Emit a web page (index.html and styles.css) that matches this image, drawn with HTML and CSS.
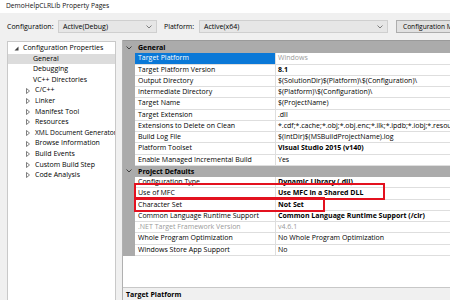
FILE: index.html
```html
<!DOCTYPE html>
<html>
<head>
<meta charset="utf-8">
<link rel="stylesheet" href="styles.css">
</head>
<body>
<div class="title">DemoHelpCLRLib Property Pages</div>
<div class="toolbar">
  <span class="lbl lbl-config">Configuration:</span>
  <div class="combo combo-config"><span>Active(Debug)</span><svg class="arrow" width="6" height="4" viewBox="0 0 6 4"><polyline points="0.5,0.5 3,3 5.5,0.5" fill="none" stroke="#707070" stroke-width="0.9"/></svg></div>
  <span class="lbl lbl-platform">Platform:</span>
  <div class="combo combo-platform"><span>Active(x64)</span><svg class="arrow" width="6" height="4" viewBox="0 0 6 4"><polyline points="0.5,0.5 3,3 5.5,0.5" fill="none" stroke="#707070" stroke-width="0.9"/></svg></div>
  <div class="button">Configuration Manager...</div>
</div>
<div class="main">
  <div class="tree">
    <div class="node lvl0"><svg class="tri" width="5" height="5" viewBox="0 0 5 5"><polygon points="4.5,0.5 4.5,4.5 0.5,4.5" fill="#404040"/></svg>Configuration Properties</div>
    <div class="node lvl1 sel">General</div>
    <div class="node lvl1">Debugging</div>
    <div class="node lvl1">VC++ Directories</div>
    <div class="node lvl1c"><svg class="tri" width="4" height="6" viewBox="0 0 4 6"><polygon points="0.5,0.5 3.5,3 0.5,5.5" fill="none" stroke="#606060" stroke-width="0.8"/></svg>C/C++</div>
    <div class="node lvl1c"><svg class="tri" width="4" height="6" viewBox="0 0 4 6"><polygon points="0.5,0.5 3.5,3 0.5,5.5" fill="none" stroke="#606060" stroke-width="0.8"/></svg>Linker</div>
    <div class="node lvl1c"><svg class="tri" width="4" height="6" viewBox="0 0 4 6"><polygon points="0.5,0.5 3.5,3 0.5,5.5" fill="none" stroke="#606060" stroke-width="0.8"/></svg>Manifest Tool</div>
    <div class="node lvl1c"><svg class="tri" width="4" height="6" viewBox="0 0 4 6"><polygon points="0.5,0.5 3.5,3 0.5,5.5" fill="none" stroke="#606060" stroke-width="0.8"/></svg>Resources</div>
    <div class="node lvl1c"><svg class="tri" width="4" height="6" viewBox="0 0 4 6"><polygon points="0.5,0.5 3.5,3 0.5,5.5" fill="none" stroke="#606060" stroke-width="0.8"/></svg><span class="xml">XML Document Generator</span></div>
    <div class="node lvl1c"><svg class="tri" width="4" height="6" viewBox="0 0 4 6"><polygon points="0.5,0.5 3.5,3 0.5,5.5" fill="none" stroke="#606060" stroke-width="0.8"/></svg>Browse Information</div>
    <div class="node lvl1c"><svg class="tri" width="4" height="6" viewBox="0 0 4 6"><polygon points="0.5,0.5 3.5,3 0.5,5.5" fill="none" stroke="#606060" stroke-width="0.8"/></svg>Build Events</div>
    <div class="node lvl1c"><svg class="tri" width="4" height="6" viewBox="0 0 4 6"><polygon points="0.5,0.5 3.5,3 0.5,5.5" fill="none" stroke="#606060" stroke-width="0.8"/></svg>Custom Build Step</div>
    <div class="node lvl1c"><svg class="tri" width="4" height="6" viewBox="0 0 4 6"><polygon points="0.5,0.5 3.5,3 0.5,5.5" fill="none" stroke="#606060" stroke-width="0.8"/></svg>Code Analysis</div>
  </div>
  <div class="grid-panel">
    <div class="list">
      <div class="cat"><div class="gut"><svg width="6" height="4" viewBox="0 0 6 4"><polyline points="0.5,0.5 3,3 5.5,0.5" fill="none" stroke="#333" stroke-width="0.9"/></svg></div><div class="cat-name">General</div></div>
      <div class="row"><div class="gut"></div><div class="name selname">Target Platform</div><div class="val grey">Windows</div></div>
      <div class="row"><div class="gut"></div><div class="name">Target Platform Version</div><div class="val b">8.1</div></div>
      <div class="row"><div class="gut"></div><div class="name">Output Directory</div><div class="val">$(SolutionDir)$(Platform)\$(Configuration)\</div></div>
      <div class="row"><div class="gut"></div><div class="name">Intermediate Directory</div><div class="val">$(Platform)\$(Configuration)\</div></div>
      <div class="row"><div class="gut"></div><div class="name">Target Name</div><div class="val">$(ProjectName)</div></div>
      <div class="row"><div class="gut"></div><div class="name">Target Extension</div><div class="val">.dll</div></div>
      <div class="row"><div class="gut"></div><div class="name">Extensions to Delete on Clean</div><div class="val">*.cdf;*.cache;*.obj;*.obj.enc;*.ilk;*.ipdb;*.iobj;*.resources;</div></div>
      <div class="row"><div class="gut"></div><div class="name">Build Log File</div><div class="val">$(IntDir)$(MSBuildProjectName).log</div></div>
      <div class="row"><div class="gut"></div><div class="name">Platform Toolset</div><div class="val b">Visual Studio 2015 (v140)</div></div>
      <div class="row"><div class="gut"></div><div class="name">Enable Managed Incremental Build</div><div class="val">Yes</div></div>
      <div class="cat"><div class="gut"><svg width="6" height="4" viewBox="0 0 6 4"><polyline points="0.5,0.5 3,3 5.5,0.5" fill="none" stroke="#333" stroke-width="0.9"/></svg></div><div class="cat-name">Project Defaults</div></div>
      <div class="row"><div class="gut"></div><div class="name">Configuration Type</div><div class="val b">Dynamic Library (.dll)</div></div>
      <div class="row"><div class="gut"></div><div class="name">Use of MFC</div><div class="val b">Use MFC in a Shared DLL</div></div>
      <div class="row"><div class="gut"></div><div class="name">Character Set</div><div class="val b">Not Set</div></div>
      <div class="row"><div class="gut"></div><div class="name">Common Language Runtime Support</div><div class="val b">Common Language Runtime Support (/clr)</div></div>
      <div class="row"><div class="gut"></div><div class="name grey">.NET Target Framework Version</div><div class="val grey">v4.6.1</div></div>
      <div class="row"><div class="gut"></div><div class="name">Whole Program Optimization</div><div class="val">No Whole Program Optimization</div></div>
      <div class="row"><div class="gut"></div><div class="name">Windows Store App Support</div><div class="val">No</div></div>
      <div class="mark mark1"></div>
      <div class="mark mark2"></div>
    </div>
    <div class="desc">Target Platform</div>
  </div>
</div>
</body>
</html>
```

FILE: styles.css
```css
html, body {
  margin: 0;
  padding: 0;
}
body {
  width: 450px;
  height: 300px;
  overflow: hidden;
  background: #f0f0f0;
  font-family: "Open Sans", "Noto Sans", "Liberation Sans", sans-serif;
  font-size: 7px;
  color: #000;
}
.title {
  height: 13px;
  line-height: 12px;
  background: #fff;
  padding-left: 6px;
  font-size: 6.7px;
  color: #111;
}
.toolbar {
  height: 27px;
  display: flex;
  align-items: center;
  padding-left: 7px;
  white-space: nowrap;
  overflow: hidden;
}
.lbl-config { width: 51px; flex-shrink: 0; }
.lbl-platform { margin-left: 7px; width: 35px; flex-shrink: 0; }
.combo {
  box-sizing: border-box;
  height: 13px;
  flex-shrink: 0;
  background: #e6e6e6;
  border: 1px solid #cfcfcf;
  display: flex;
  align-items: center;
  justify-content: space-between;
  padding: 0 4px 0 4px;
}
.combo-config { width: 99px; }
.combo-platform { width: 189px; }
.button {
  box-sizing: border-box;
  height: 13px;
  margin-left: 8px;
  flex: 1;
  min-width: 0;
  background: #e1e1e1;
  border: 1px solid #adadad;
  border-right: none;
  line-height: 11px;
  padding-left: 6px;
  font-size: 6.6px;
  overflow: hidden;
}
.main {
  display: flex;
  align-items: flex-start;
  height: 260px;
  overflow: hidden;
}
.tree {
  box-sizing: border-box;
  margin-left: 7px;
  margin-top: 1px;
  width: 109px;
  height: 270px;
  flex-shrink: 0;
  background: #fff;
  border: 1px solid #c9c9c9;
  padding-top: 1px;
  overflow: hidden;
}
.node {
  height: 10.6px;
  line-height: 10.6px;
  white-space: nowrap;
  display: flex;
  align-items: center;
}
.xml { font-size: 6.7px; }
.tri { flex-shrink: 0; }
.lvl0 { padding-left: 6px; }
.lvl0 .tri { margin-right: 4px; }
.lvl1 { padding-left: 25px; }
.lvl1c { padding-left: 18px; }
.lvl1c .tri { margin-right: 5px; }
.sel { background: #dcdcdc; }
.grid-panel {
  margin-left: 6px;
  flex: 1;
  min-width: 0;
  height: 260px;
  display: flex;
  flex-direction: column;
  overflow: hidden;
  border-left: 1px solid #b0b0b0;
}
.list {
  position: relative;
  box-sizing: border-box;
  height: 247px;
  flex-shrink: 0;
  background: #fff;
  border-top: 1px solid #9a9a9a;
  padding-top: 1px;
  background-image: linear-gradient(#ababab, #ababab);
  background-repeat: no-repeat;
  background-size: 100% 1px;
}
.row, .cat {
  box-sizing: border-box;
  height: 11.25px;
  display: flex;
  line-height: 10.25px;
  white-space: nowrap;
}
.gut {
  width: 12px;
  flex-shrink: 0;
  background: #ababab;
  display: flex;
  align-items: center;
  justify-content: center;
}
.cat {
  background: #ababab;
  font-weight: bold;
}
.cat-name {
  padding-left: 3px;
  line-height: 11px;
}
.name, .val {
  box-sizing: border-box;
  height: 11.25px;
  border-bottom: 1px solid #dedede;
  overflow: hidden;
}
.name {
  width: 141px;
  flex-shrink: 0;
  padding-left: 3px;
  border-right: 1px solid #dedede;
}
.val {
  flex: 1;
  min-width: 0;
  padding-left: 2px;
}
.selname {
  background: #0a78d7;
  color: #fff;
}
.grey { color: #9a9a9a; }
.b { font-weight: bold; }
.mark {
  position: absolute;
  border: 2px solid #e3111f;
  box-sizing: border-box;
}
.mark1 { left: 11px; top: 142px; width: 251px; height: 17px; }
.mark2 { left: 11px; top: 156px; width: 191px; height: 15px; }
.desc {
  box-sizing: border-box;
  height: 20px;
  flex-shrink: 0;
  border-top: 1px solid #c8c8c8;
  background: #f0f0f0;
  font-weight: bold;
  padding-left: 3px;
  padding-top: 2px;
  line-height: 10px;
}
```
